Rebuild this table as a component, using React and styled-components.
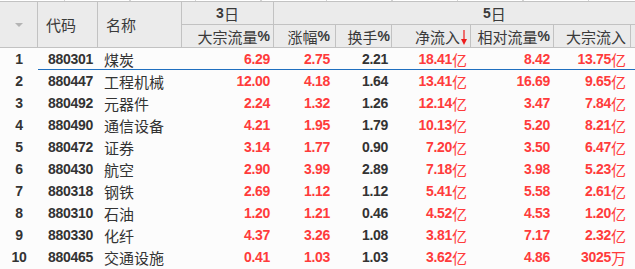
import React from "react";
import styled, { createGlobalStyle } from "styled-components";

const COLS = "38px 60px 84px 92px 62px 56px 79px 83px 77px 1fr";
const RED = "#ff3b3b";
const DARK = "#333333";

const rows = [
  ["880301", "煤炭", "6.29", "2.75", "2.21", "18.41", "亿", "8.42", "13.75", "亿"],
  ["880447", "工程机械", "12.00", "4.18", "1.64", "13.41", "亿", "16.69", "9.65", "亿"],
  ["880492", "元器件", "2.24", "1.32", "1.26", "12.14", "亿", "3.47", "7.84", "亿"],
  ["880490", "通信设备", "4.21", "1.95", "1.79", "10.13", "亿", "5.20", "8.21", "亿"],
  ["880472", "证券", "3.14", "1.77", "0.90", "7.20", "亿", "3.50", "6.47", "亿"],
  ["880430", "航空", "2.90", "3.99", "2.89", "7.18", "亿", "3.98", "5.23", "亿"],
  ["880318", "钢铁", "2.69", "1.12", "1.12", "5.41", "亿", "5.58", "2.61", "亿"],
  ["880310", "石油", "1.20", "1.21", "0.46", "4.52", "亿", "4.53", "1.20", "亿"],
  ["880330", "化纤", "4.37", "3.26", "1.08", "3.81", "亿", "7.17", "2.32", "亿"],
  ["880465", "交通设施", "0.41", "1.03", "1.03", "3.62", "亿", "4.86", "3025", "万"],
];

const GlobalStyle = createGlobalStyle`
  body {
    margin: 0;
    background: #fcfcfc;
    font-family: "Noto Sans CJK SC", "Liberation Sans", sans-serif;
  }
`;

const Table = styled.div`
  width: 635px;
  overflow: hidden;
`;

const TopStrip = styled.div`
  height: 1px;
  background: repeating-linear-gradient(
    to right,
    #ffffff 0 64px,
    #d4d4d4 64px 65.5px
  );
  border-bottom: 1px solid #c2c2c2;
`;

const Header = styled.div`
  display: grid;
  grid-template-columns: ${COLS};
  grid-template-rows: 23px 23px;
  background: #ebebeb;
  color: #3a3a3a;
  font-size: 15px;
`;

const HeadCell = styled.div`
  grid-column: ${p => p.$col};
  grid-row: ${p => p.$row};
  display: flex;
  align-items: center;
  justify-content: ${p => p.$justify || "flex-end"};
  padding: ${p => p.$pad || "0 2px 0 0"};
  border-right: ${p => (p.$noRight ? "none" : "1px solid #c2c2c2")};
  border-bottom: 1px solid #c2c2c2;
  white-space: nowrap;
  line-height: 1;
  box-sizing: border-box;
`;

const SortMark = styled.span`
  width: 0;
  height: 0;
  border-left: 4px solid transparent;
  border-right: 4px solid transparent;
  border-top: 4px solid #b4b4b4;
`;

const Pct = styled.span`
  font-family: "Liberation Sans", Arial, sans-serif;
  font-weight: 700;
  font-size: 14px;
`;

const Arrow = styled.svg`
  width: 6px;
  height: 15px;
  margin-left: 1px;
  margin-top: 2px;
`;

const Row = styled.div`
  display: grid;
  grid-template-columns: ${COLS};
  height: 22px;
`;

const Cell = styled.div`
  display: flex;
  align-items: center;
  justify-content: ${p => p.$justify || "flex-end"};
  padding: ${p => p.$pad || "0 4px 0 0"};
  color: ${p => p.$color || DARK};
  box-shadow: ${p => (p.$line ? "inset 0 -1px 0 #1f6fbf" : "none")};
  white-space: nowrap;
  overflow: hidden;
`;

const Num = styled.span`
  font-family: "Liberation Sans", Arial, sans-serif;
  font-weight: 700;
  font-size: 14px;
  letter-spacing: -0.3px;
`;

const Name = styled.span`
  font-size: 15px;
  color: #333;
  line-height: 1;
`;

const Unit = styled.span`
  font-size: 15px;
  line-height: 1;
  font-weight: 400;
`;

const HeadLabel = ({ text, pct }) => (
  <>
    {text}
    {pct && <Pct>%</Pct>}
  </>
);

const App = () => {
  return (
    <>
      <GlobalStyle />
      <Table>
        <TopStrip />
        <Header>
          <HeadCell $col="1" $row="1 / 3" $justify="center" $pad="0">
            <SortMark />
          </HeadCell>
          <HeadCell $col="2" $row="1 / 3" $justify="flex-start" $pad="0 0 0 8px">
            代码
          </HeadCell>
          <HeadCell $col="3" $row="1 / 3" $justify="flex-start" $pad="0 0 0 8px">
            名称
          </HeadCell>
          <HeadCell $col="4" $row="1" $justify="center" $pad="0">
            <Pct>3</Pct>日
          </HeadCell>
          <HeadCell $col="5 / 11" $row="1" $justify="flex-start" $pad="0 0 0 209px" $noRight>
            <Pct>5</Pct>日
          </HeadCell>
          <HeadCell $col="4" $row="2" $pad="0 3px 0 0">
            <HeadLabel text="大宗流量" pct />
          </HeadCell>
          <HeadCell $col="5" $row="2" $pad="0 5px 0 0">
            <HeadLabel text="涨幅" pct />
          </HeadCell>
          <HeadCell $col="6" $row="2" $pad="0 1px 0 0">
            <HeadLabel text="换手" pct />
          </HeadCell>
          <HeadCell $col="7" $row="2" $pad="0 3px 0 0">
            净流入
            <Arrow viewBox="0 0 6 15">
              <line x1="3" y1="0" x2="3" y2="10" stroke="#ee1c1c" strokeWidth="1.2" />
              <polygon points="0,9 6,9 3,15" fill="#ee1c1c" />
            </Arrow>
          </HeadCell>
          <HeadCell $col="8" $row="2" $pad="0 3px 0 0">
            <HeadLabel text="相对流量" pct />
          </HeadCell>
          <HeadCell $col="9" $row="2" $pad="0 4px 0 0">
            大宗流入
          </HeadCell>
          <HeadCell $col="10" $row="2" $noRight />
        </Header>
        {rows.map((r, i) => {
          const line = i === 0;
          return (
            <Row key={r[0]}>
              <Cell $justify="center" $pad="0">
                <Num>{i + 1}</Num>
              </Cell>
              <Cell $pad="0 5px 0 0" $line={line}>
                <Num>{r[0]}</Num>
              </Cell>
              <Cell $justify="flex-start" $pad="0 0 0 6px" $line={line}>
                <Name>{r[1]}</Name>
              </Cell>
              <Cell $color={RED} $pad="0 4px 0 0" $line={line}>
                <Num>{r[2]}</Num>
              </Cell>
              <Cell $color={RED} $pad="0 6px 0 0" $line={line}>
                <Num>{r[3]}</Num>
              </Cell>
              <Cell $pad="0 4px 0 0" $line={line}>
                <Num>{r[4]}</Num>
              </Cell>
              <Cell $color={RED} $pad="0 4px 0 0" $line={line}>
                <Num>{r[5]}</Num>
                <Unit>{r[6]}</Unit>
              </Cell>
              <Cell $color={RED} $pad="0 4px 0 0" $line={line}>
                <Num>{r[7]}</Num>
              </Cell>
              <Cell $color={RED} $pad="0 5px 0 0" $line={line}>
                <Num>{r[8]}</Num>
                <Unit>{r[9]}</Unit>
              </Cell>
              <Cell $line={line} />
            </Row>
          );
        })}
      </Table>
    </>
  );
};

export default App;
